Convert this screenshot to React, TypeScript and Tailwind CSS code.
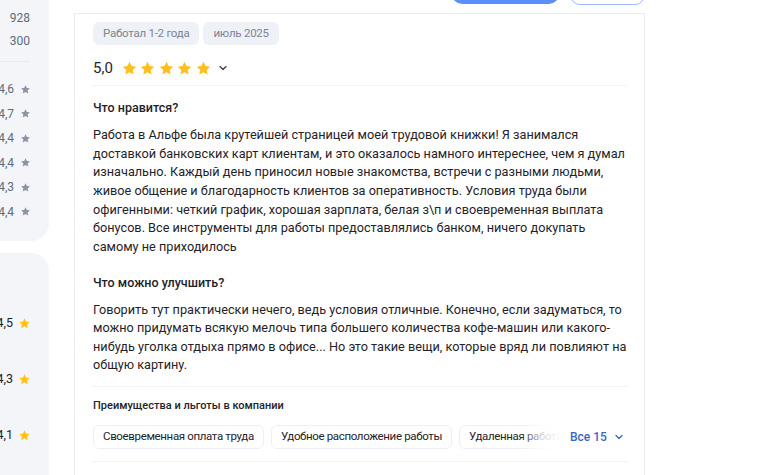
import React from "react";

const Star = ({ className }: { className: string }) => (
  <svg viewBox="0 0 24 24" className={className} fill="currentColor">
    <path d="M12 2.5l2.9 6.1 6.6.8-4.9 4.6 1.3 6.6L12 17.3l-5.9 3.3 1.3-6.6-4.9-4.6 6.6-.8z" />
  </svg>
);

const Chevron = ({ className }: { className: string }) => (
  <svg viewBox="0 0 24 24" className={className} fill="none" stroke="currentColor" strokeWidth={2.6} strokeLinecap="round" strokeLinejoin="round">
    <path d="M6 9l6 6 6-6" />
  </svg>
);

const likes = [
  "Работа в Альфе была крутейшей страницей моей трудовой книжки! Я занимался",
  "доставкой банковских карт клиентам, и это оказалось намного интереснее, чем я думал",
  "изначально. Каждый день приносил новые знакомства, встречи с разными людьми,",
  "живое общение и благодарность клиентов за оперативность. Условия труда были",
  "офигенными: четкий график, хорошая зарплата, белая з\\п и своевременная выплата",
  "бонусов. Все инструменты для работы предоставлялись банком, ничего докупать",
  "самому не приходилось",
];

const improve = [
  "Говорить тут практически нечего, ведь условия отличные. Конечно, если задуматься, то",
  "можно придумать всякую мелочь типа большего количества кофе-машин или какого-",
  "нибудь уголка отдыха прямо в офисе... Но это такие вещи, которые вряд ли повлияют на",
  "общую картину.",
];

export default function App() {
  const grayRatings = ["4,6", "4,7", "4,4", "4,4", "4,3", "4,4"];
  const yellowRatings = ["4,5", "4,3", "4,1"];
  return (
    <div className="w-[768px] h-[475px] overflow-hidden bg-white relative font-[Roboto,'Noto_Sans',sans-serif]">
      {/* top buttons */}
      <div className="absolute left-[452px] top-[-20px] w-[107px] h-[24px] rounded-[10px] bg-[#5b8ff9]" />
      <div className="absolute left-[570px] top-[-20px] w-[75px] h-[25px] rounded-[10px] border border-[#9dbbf7] bg-white" />

      <div className="flex h-full">
        {/* sidebar */}
        <div className="w-[49px] flex flex-col shrink-0">
          <div className="h-[241px] bg-[#f3f5f9] rounded-br-[18px] flex flex-col">
            <div className="flex flex-col items-end pr-[19px] text-[12px] text-[#5f6b7a] pt-[10px] gap-[7px]">
              <div className="leading-[16px]">928</div>
              <div className="leading-[16px]">300</div>
            </div>
            <div className="h-px w-[30px] bg-[#e6e9ef] mt-[12px]" />
            <div className="flex flex-col items-end pr-[18px] pt-[19px] gap-[8.5px] text-[12px] text-[#5f6b7a]">
              {grayRatings.map((r, i) => (
                <div key={i} className="flex items-center gap-[6px] leading-[16px]">
                  <span>{r}</span>
                  <Star className="w-[11px] h-[11px] text-[#8a94a3]" />
                </div>
              ))}
            </div>
          </div>
          <div className="mt-[12px] flex-1 bg-[#f3f5f9] rounded-tr-[18px] flex flex-col items-end pr-[18px] pt-[62px] gap-[40px] text-[12.5px] text-[#1f2329]">
            {yellowRatings.map((r, i) => (
              <div key={i} className="flex items-center gap-[5px] leading-[16px]">
                <span>{r}</span>
                <Star className="w-[13px] h-[13px] text-[#ffbf1f]" />
              </div>
            ))}
          </div>
        </div>

        {/* main card */}
        <div className="ml-[25px] mt-[13px] w-[571px] border-l border-t border-r border-[#e9ecf1] pl-[18px] pr-[17px] flex flex-col">
          <div className="flex gap-[4px] pt-[8px]">
            <span className="h-[23px] px-[10px] rounded-[6px] bg-[#eef1f6] text-[11.5px] tracking-[-0.25px] text-[#7b8594] flex items-center">Работал 1-2 года</span>
            <span className="h-[23px] px-[10px] rounded-[6px] bg-[#eef1f6] text-[11.5px] tracking-[-0.25px] text-[#7b8594] flex items-center">июль 2025</span>
          </div>
          <div className="flex items-center mt-[14px] h-[18px]">
            <span className="text-[15px] text-[#1f2329] mr-[8px]">5,0</span>
            <div className="flex gap-[1.5px]">
              {[0, 1, 2, 3, 4].map((i) => (
                <Star key={i} className="w-[17px] h-[17px] text-[#ffbf1f]" />
              ))}
            </div>
            <Chevron className="w-[12px] h-[12px] text-[#3a3f47] ml-[5px]" />
          </div>
          <div className="h-px bg-[#f0f2f5] mt-[8px] mr-[1px]" />

          <div className="text-[12.5px] font-medium text-[#1f2329] mt-[13px] leading-[18px]">Что нравится?</div>
          <p className="text-[12.7px] leading-[18.65px] text-[#1f2329] mt-[9px] whitespace-nowrap">
            {likes.map((l, i) => (
              <React.Fragment key={i}>
                {l}
                {i < likes.length - 1 && <br />}
              </React.Fragment>
            ))}
          </p>

          <div className="text-[12.5px] font-medium text-[#1f2329] mt-[17px] leading-[18px]">Что можно улучшить?</div>
          <p className="text-[12.7px] leading-[18.5px] text-[#1f2329] mt-[9px] whitespace-nowrap">
            {improve.map((l, i) => (
              <React.Fragment key={i}>
                {l}
                {i < improve.length - 1 && <br />}
              </React.Fragment>
            ))}
          </p>
          <div className="h-px bg-[#f0f2f5] mt-[11px]" />

          <div className="text-[11px] font-medium text-[#1f2329] mt-[11px] leading-[16px]">Преимущества и льготы в компании</div>
          <div className="flex items-center mt-[11px] relative">
            <div className="flex gap-[7px] overflow-hidden w-[467px] shrink-0">
              <span className="h-[24px] px-[9px] rounded-[6px] border border-[#eceff3] text-[11.5px] tracking-[-0.35px] text-[#1f2329] flex items-center whitespace-nowrap shrink-0">Своевременная оплата труда</span>
              <span className="h-[24px] px-[9px] rounded-[6px] border border-[#eceff3] text-[11.5px] tracking-[-0.35px] text-[#1f2329] flex items-center whitespace-nowrap shrink-0">Удобное расположение работы</span>
              <span className="h-[24px] px-[9px] rounded-[6px] border border-[#eceff3] text-[11.5px] tracking-[-0.35px] text-[#1f2329] flex items-center whitespace-nowrap shrink-0">Удаленная работа</span>
            </div>
            <div className="absolute left-[428px] top-0 w-[41px] h-[24px] bg-gradient-to-r from-transparent via-white/80 to-white" />
            <span className="ml-[10px] text-[12px] font-medium text-[#3d64c4] whitespace-nowrap">Все 15</span>
            <Chevron className="w-[12px] h-[12px] text-[#3d64c4] ml-[6px]" />
          </div>
          <div className="h-px bg-[#f0f2f5] mt-[12px]" />
        </div>
      </div>
    </div>
  );
}
